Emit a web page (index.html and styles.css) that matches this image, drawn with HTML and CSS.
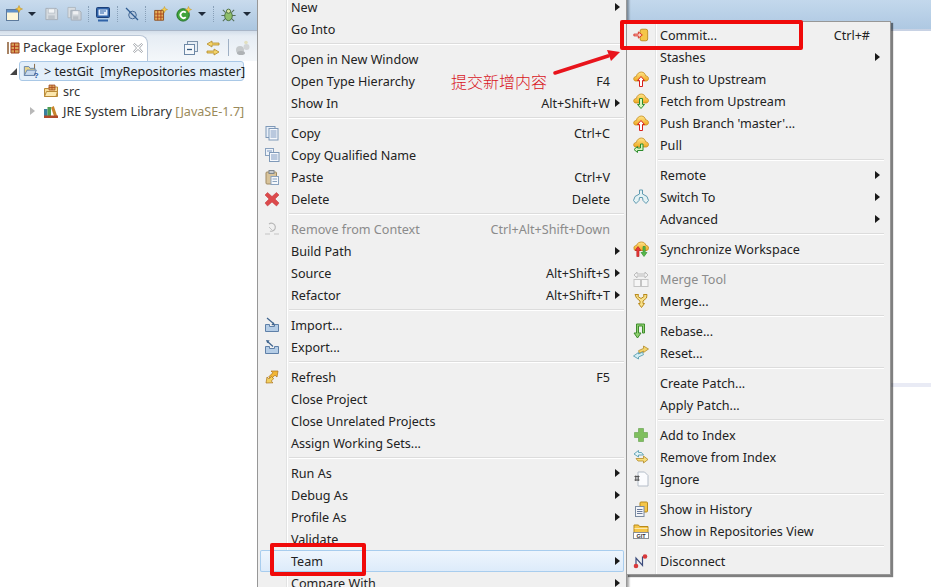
FILE: index.html
```html
<!DOCTYPE html>
<html lang="en">
<head>
<meta charset="utf-8">
<title>Eclipse Team menu</title>
<link rel="stylesheet" href="styles.css">
</head>
<body>
<svg class="sprite" xmlns="http://www.w3.org/2000/svg">
  <defs>
    <linearGradient id="gold" x1="0" y1="0" x2="0" y2="1"><stop offset="0" stop-color="#ffe68a"/><stop offset="1" stop-color="#f0a820"/></linearGradient>
    <symbol id="i-new" viewBox="0 0 18 18"><rect x="1.500" y="4.500" width="12" height="11" fill="#fdf6d8" stroke="#5d7a9c"/><rect x="2" y="5" width="11" height="2.500" fill="#5f90c8"/><path d="M14 0.500l1 2.500 2.500 1-2.500 1-1 2.500-1-2.500-2.500-1 2.500-1z" fill="#f5c33c" stroke="#b98a1c" stroke-width=".5"/></symbol>
    <symbol id="i-save" viewBox="0 0 16 16"><path d="M2 2h11l1.500 1.500v10.500h-12.500z" fill="#d6dbe0" stroke="#a4adb6"/><rect x="4.500" y="2.500" width="7" height="4.500" fill="#f2f4f6" stroke="#b0b8c0" stroke-width=".7"/><rect x="4.500" y="9.500" width="7" height="4" fill="#bcc3ca"/></symbol>
    <symbol id="i-saveall" viewBox="0 0 16 16"><path d="M1 1h8v3h-5v8h-3z" fill="#d8dde2" stroke="#a8b0b8" stroke-width=".8"/><path d="M4.500 4.500h9l1.500 1.500v8.500h-10.500z" fill="#ccd2d8" stroke="#a4adb6"/><rect x="6.500" y="5" width="5.500" height="3.500" fill="#eef0f2"/><rect x="6.500" y="10.500" width="5.500" height="3.500" fill="#b6bdc4"/></symbol>
    <symbol id="i-monitor" viewBox="0 0 16 16"><rect x="1.500" y="1.500" width="13" height="10" rx="1" fill="#2f62a8" stroke="#1d3f78"/><rect x="3.500" y="3.500" width="9" height="6" fill="#dfeafa"/><path d="M5 5h6M5 7h4" stroke="#2f62a8"/><path d="M3 14.500h10" stroke="#2f62a8" stroke-width="2"/></symbol>
    <symbol id="i-skip" viewBox="0 0 16 16"><circle cx="8.500" cy="9" r="3.800" fill="#b8cbe0" stroke="#456a96"/><path d="M2 2l12 12" stroke="#2f5c92" stroke-width="1.300"/></symbol>
    <symbol id="i-pkgadd" viewBox="0 0 18 18"><path d="M3 5h10v11h-10z" fill="#e5b15a" stroke="#8a4a1c"/><path d="M3 9h10M3 12.500h10M6.500 5v11M10 5v11" stroke="#a8401c"/><path d="M14 0.500l1 2.500 2.500 1-2.500 1-1 2.500-1-2.500-2.500-1 2.500-1z" fill="#f7cf50" stroke="#b98a1c" stroke-width=".5"/></symbol>
    <symbol id="i-run" viewBox="0 0 18 18"><circle cx="8" cy="10" r="7" fill="#3fa33a" stroke="#1e6b22"/><path d="M11 7.500a3.500 3.500 0 1 0 0 5" fill="none" stroke="#fff" stroke-width="2"/><path d="M14 0.500l1 2.500 2.500 1-2.500 1-1 2.500-1-2.500-2.500-1 2.500-1z" fill="#f7cf50" stroke="#b98a1c" stroke-width=".5"/></symbol>
    <symbol id="i-bug" viewBox="0 0 18 18"><path d="M3 4l3 3M15 4l-3 3M1.500 10h4M16.500 10h-4M3 16l3-3M15 16l-3-3" stroke="#55705a" stroke-width="1.100"/><ellipse cx="9" cy="10.500" rx="4" ry="5" fill="#8fbf6a" stroke="#4a6e42"/><circle cx="9" cy="5.500" r="2.200" fill="#d6e4a0" stroke="#4a6e42"/></symbol>
    <symbol id="i-pe" viewBox="0 0 14 14"><path d="M2 1v12" stroke="#8a5a30" stroke-width="1.500"/><path d="M5 2h8v10h-8z" fill="#d9a45a" stroke="#99401c"/><path d="M5 5.300h8M5 8.700h8M8.500 2v10" stroke="#b0381c"/></symbol>
    <symbol id="i-close" viewBox="0 0 12 12"><path d="M2.500 1.500l3.500 3 3.500-3 1 1-3 3.500 3 3.500-1 1-3.500-3-3.500 3-1-1 3-3.500-3-3.500z" fill="#fff" stroke="#8e9298" stroke-width=".8"/></symbol>
    <symbol id="i-collapse" viewBox="0 0 16 16"><rect x="4.500" y="1.500" width="10" height="10" fill="#e6edf4" stroke="#7d93aa"/><rect x="1.500" y="4.500" width="10" height="10" fill="#f5f8fb" stroke="#6d88a6"/><path d="M4 9.500h5" stroke="#34587e" stroke-width="1.300"/></symbol>
    <symbol id="i-link" viewBox="0 0 16 16"><path d="M7 1l-5 3 5 3v-2h7v-2h-7z" fill="#f3d46b" stroke="#b28a2a" stroke-width=".8"/><path d="M9 9l5 3-5 3v-2h-7v-2h7z" fill="#f3d46b" stroke="#b28a2a" stroke-width=".8"/></symbol>
    <symbol id="i-views" viewBox="0 0 16 16"><circle cx="5" cy="10" r="4" fill="#c5c9cb"/><circle cx="11.500" cy="7" r="3" fill="#d2d5d7"/><circle cx="11" cy="2.500" r="1.800" fill="#e2e0c0"/><ellipse cx="6" cy="13" rx="4" ry="2" fill="#aeb2b5"/></symbol>
    <symbol id="i-proj" viewBox="0 0 18 18"><path d="M1.500 14v-10h5l1.500 2h5.500v8z" fill="#e7d58e" stroke="#5f7ea6"/><path d="M1.500 14l3-6h10.500l-2.500 6z" fill="#c6d9ee" stroke="#5f7ea6"/><text x="12" y="17" class="qm">?</text><path d="M13 1v5" stroke="#7e5a30"/></symbol>
    <symbol id="i-src" viewBox="0 0 16 16"><path d="M1.500 13.500v-8h4l1-1.500h8v9.500z" fill="#f7dc96" stroke="#b98a38"/><path d="M1.500 13.500l2-5h11l-1.500 5z" fill="#fbe7ae" stroke="#b98a38"/><path d="M6 2h6v5h-6z" fill="#d9a45a" stroke="#99401c" stroke-width=".7"/><path d="M6 4.500h6M9 2v5" stroke="#a8401c" stroke-width=".7"/></symbol>
    <symbol id="i-jre" viewBox="0 0 16 16"><rect x="1" y="6" width="3.500" height="8" fill="#3a7f9e"/><rect x="4.500" y="4" width="3.500" height="10" fill="#4f9d52"/><path d="M8 4.500l2.800-1.500 3.500 10.500-2.800 1z" fill="#c8842c"/><rect x="1" y="12.500" width="14" height="2.500" fill="#b04a2a"/></symbol>
    <symbol id="i-copy" viewBox="0 0 16 16"><rect x="2" y="1.500" width="9" height="11" fill="#e8eff8" stroke="#7f99b8"/><rect x="5" y="3.500" width="9" height="11.500" fill="#f5f8fc" stroke="#7f99b8"/><path d="M6.500 6h6M6.500 8h6M6.500 10h6M6.500 12h6" stroke="#7f99c0"/></symbol>
    <symbol id="i-copyq" viewBox="0 0 16 16"><rect x="1.500" y="1.500" width="8" height="7" fill="#eef3f9" stroke="#8aa2bf"/><rect x="5.500" y="5.500" width="9.500" height="9" fill="#f5f8fc" stroke="#7f99b8"/><path d="M7 8h6.500M7 10h6.500M7 12h6.500M3 4h5" stroke="#7f99c0"/></symbol>
    <symbol id="i-paste" viewBox="0 0 16 16"><rect x="2" y="3" width="10.500" height="12" rx="1" fill="#d8c39a" stroke="#a08a62"/><rect x="5" y="1.500" width="5" height="3" fill="#c4c8cc" stroke="#7e858c"/><rect x="7" y="7.500" width="7.500" height="8" fill="#f6f8fb" stroke="#8aa2bf"/><path d="M8.500 10h4.500M8.500 12.500h4.500" stroke="#8aa2bf"/></symbol>
    <symbol id="i-del" viewBox="0 0 16 16"><path d="M3.500 1.500l4.500 4 4.500-4 2.500 2.500-4 4 4 4-2.500 3-4.500-4-4.500 4-2.500-3 4-4-4-4z" fill="#dc4a4c" stroke="#c03034" stroke-width=".5"/></symbol>
    <symbol id="i-rmctx" viewBox="0 0 16 16"><path d="M5 3a4 4 0 1 1 1 7" fill="none" stroke="#b8b8b8" stroke-width="1.200"/><path d="M1 13h5M10 13h5M5 6l3 3" stroke="#c4c4c4"/></symbol>
    <symbol id="i-import" viewBox="0 0 16 16"><path d="M1.500 7.500h4v2h5v-2h4v7h-13z" fill="#b5cde6" stroke="#5f80a8"/><path d="M3 1l6.500 5.500" stroke="#3f648e" stroke-width="1.200"/><path d="M11 8.500l-3.700-.6 2.500-2.700z" fill="#3f648e"/></symbol>
    <symbol id="i-export" viewBox="0 0 16 16"><path d="M1.500 7.500h4v2h5v-2h4v7h-13z" fill="#b5cde6" stroke="#5f80a8"/><path d="M9 7.500l-5.500-5" stroke="#3f648e" stroke-width="1.200"/><path d="M2 1l3.700.6-2.500 2.700z" fill="#3f648e"/></symbol>
    <symbol id="i-refresh" viewBox="0 0 16 16"><path d="M14 2l-1 6-2-1.800-4 3.800-2.200-2.200 4-4-1.800-1.800z" fill="#f2b636" stroke="#a9701a" stroke-width=".7"/><path d="M2 14l1-6 2 1.800 2.500-2.300 2.200 2.200-2.500 2.300 1.800 1.800z" fill="#f2d060" stroke="#a9701a" stroke-width=".7"/></symbol>
    <symbol id="i-commit" viewBox="0 0 18 16"><rect x="8" y="1.500" width="8.500" height="13" rx="2" fill="#f5c649" stroke="#b98a1c"/><path d="M1 7h5v-2.500l4.500 3.500-4.500 3.500v-2.500h-5z" fill="#fbd0c8" stroke="#d8281c"/></symbol>
    <symbol id="i-push" viewBox="0 0 16 16"><path d="M.8 8.500c-.5-2 1-3 2.500-3 .6-3 3-4.500 5-4.500 2.500 0 4 1.800 4.300 3.800 1.700 0 2.900 1.400 2.900 2.800 0 1.500-1.200 2.400-2.500 2.400h-10.300c-1 0-1.600-.5-1.900-1.500z" fill="url(#gold)" stroke="#c48a1c" stroke-width=".8"/><path d="M8 5.500l3.500 4h-2v6h-3v-6h-2z" fill="#fff" stroke="#d8201c"/></symbol>
    <symbol id="i-fetch" viewBox="0 0 16 16"><path d="M.8 8.500c-.5-2 1-3 2.500-3 .6-3 3-4.500 5-4.500 2.500 0 4 1.800 4.300 3.800 1.700 0 2.900 1.400 2.900 2.800 0 1.500-1.200 2.400-2.500 2.400h-10.300c-1 0-1.600-.5-1.900-1.500z" fill="url(#gold)" stroke="#c48a1c" stroke-width=".8"/><path d="M8 15.500l3.500-4h-2v-6h-3v6h-2z" fill="#d8f4c0" stroke="#2c8c2c"/></symbol>
    <symbol id="i-pull" viewBox="0 0 16 16"><path d="M.8 8.500c-.5-2 1-3 2.500-3 .6-3 3-4.500 5-4.500 2.500 0 4 1.800 4.300 3.800 1.700 0 2.900 1.400 2.900 2.800 0 1.500-1.200 2.400-2.500 2.400h-10.300c-1 0-1.600-.5-1.900-1.500z" fill="url(#gold)" stroke="#c48a1c" stroke-width=".8"/><path d="M1 12.500l3.500-3v1.500h3v-4h2.500v6.500h-5.500v2z" fill="#d8f4c0" stroke="#2c8c2c"/></symbol>
    <symbol id="i-switch" viewBox="0 0 16 16"><path d="M6.500 1v4l-4.500 2.500-1.500 4 2.500 3 3-3 .5-3h3l.5 3 3 3 2.500-3-1.500-4-4.500-2.500v-4z" fill="#e4f2f4" stroke="#5f9ab0"/></symbol>
    <symbol id="i-sync" viewBox="0 0 16 16"><path d="M1 7.500c-.5-2 1-3 2.500-3 .6-2.500 3-3.500 5-3.500 2.500 0 4 1.500 4.300 3.300 1.700 0 2.700 1.300 2.700 2.700 0 1-.5 2-1.500 2.500h-11c-1 0-1.700-.5-2-1.500z" fill="url(#gold)" stroke="#c48a1c" stroke-width=".8"/><path d="M5 5.500l3 4h-2v6h-2.200v-6h-1.800z" fill="#e8383a" stroke="#b41c1c" stroke-width=".6"/><path d="M11 15.500l3-4h-1.800v-6h-2.200v6h-2z" fill="#58b84a" stroke="#2c8c2c" stroke-width=".6"/></symbol>
    <symbol id="i-mtool" viewBox="0 0 16 16"><path d="M1 4l3-3v2h8v-2l3 3-3 3v-2h-8v2z" fill="#f0f0f0" stroke="#bdbdbd"/><rect x="1" y="8.500" width="6.500" height="7" fill="#f6f6f6" stroke="#c4c4c4"/><rect x="8.500" y="8.500" width="6.500" height="7" fill="#f6f6f6" stroke="#c4c4c4"/></symbol>
    <symbol id="i-merge" viewBox="0 0 16 16"><path d="M2 1.500h3.500l-.5 2 3 2 3-2-.5-2h3.500l-.5 3.500-3.500 3v2.500h1.500l-3 4-3-4h1.500v-2.500l-3.500-3z" fill="#f7e08a" stroke="#b98a1c"/></symbol>
    <symbol id="i-rebase" viewBox="0 0 16 16"><path d="M3.500 1v9h-2.500l3.500 5 3.500-5h-2.500v-7h4v7h2v-9h-2z" fill="#8fd070" stroke="#3f8c2c"/></symbol>
    <symbol id="i-reset" viewBox="0 0 16 16"><path d="M10.500 1l5 3-5 3.500v-1.500l-4 2.200-1-2.500 5-2.300z" fill="#f3d46b" stroke="#b28a2a" stroke-width=".8"/><path d="M.5 11l5-3.500v1.500l4-1.800 1 2.500-5 2.300v2z" fill="#d4eef4" stroke="#4a96a8" stroke-width=".8"/></symbol>
    <symbol id="i-add" viewBox="0 0 16 16"><path d="M5.500 1.500h5v4h4v5h-4v4h-5v-4h-4v-5h4z" fill="#7fbf5e" stroke="#5f9e48" stroke-width=".6"/></symbol>
    <symbol id="i-rmindex" viewBox="0 0 16 16"><path d="M1 5l4.500-3.500v2h3l2 2.500h-5v2z" fill="#e4f4f8" stroke="#4a96a8" stroke-width=".8"/><path d="M15 10.500l-4.500 3.500v-2h-5.500l-2-2.500h7.500v-2.500z" fill="#f7de7a" stroke="#b28a2a" stroke-width=".8"/></symbol>
    <symbol id="i-ignore" viewBox="0 0 16 16"><path d="M5 1h6.500l3.500 3.500v10.500h-10z" fill="#fbfcfe" stroke="#b4bdc8"/><path d="M1.500 5.500h5M1.500 9h5M2.800 4.500v5.500M5.200 4.500v5.500" stroke="#555" stroke-width="1.100"/></symbol>
    <symbol id="i-history" viewBox="0 0 16 16"><rect x="7" y="1" width="7.500" height="10" rx="1" fill="#f5c649" stroke="#b98a1c"/><rect x="2.500" y="5.500" width="8.500" height="10" fill="#f3f5f9" stroke="#7a8aa0"/><path d="M4 8.500h5.500M4 10.500h5.500M4 12.500h5.500" stroke="#6a7a98"/></symbol>
    <symbol id="i-repos" viewBox="0 0 16 16"><path d="M1 10v-8h4.500l1 1.500h8.500v6.500z" fill="#f5c649" stroke="#b98a1c"/><path d="M1.500 5.500h13" stroke="#fbe7ae"/><rect x=".5" y="9.500" width="15" height="6" fill="#fff" stroke="#8a8f96"/><text x="8" y="14.500" class="gittxt">GIT</text></symbol>
    <symbol id="i-disc" viewBox="0 0 16 16"><path d="M3 13v-8l6.500 7.500v-9" fill="none" stroke="#3c4c7c" stroke-width="1.200"/><circle cx="3" cy="13" r="2.300" fill="#d83a3c"/><circle cx="12" cy="3.500" r="2.300" fill="#d83a3c"/></symbol>
  </defs>
</svg>

<div class="screen">
  <section class="left">
    <header class="toolbar">
      <svg class="tb-icon tb-new"><use href="#i-new"/></svg><i class="caret"></i>
      <svg class="tb-icon tb-save"><use href="#i-save"/></svg>
      <svg class="tb-icon tb-saveall"><use href="#i-saveall"/></svg><i class="grip"></i>
      <svg class="tb-icon"><use href="#i-monitor"/></svg><i class="grip"></i>
      <svg class="tb-icon tb-skip"><use href="#i-skip"/></svg><i class="grip"></i>
      <svg class="tb-icon tb-pkg"><use href="#i-pkgadd"/></svg>
      <svg class="tb-icon"><use href="#i-run"/></svg><i class="caret caret-sm"></i><i class="grip"></i>
      <svg class="tb-icon tb-bug"><use href="#i-bug"/></svg><i class="caret"></i>
    </header>
    <div class="tabbar">
      <div class="tab">
        <svg class="pe-icon"><use href="#i-pe"/></svg>
        <span>Package Explorer</span>
        <svg class="close"><use href="#i-close"/></svg>
      </div>
      <div class="tab-actions">
        <svg class="act"><use href="#i-collapse"/></svg>
        <svg class="act"><use href="#i-link"/></svg>
        <i class="act-sep"></i>
        <svg class="act"><use href="#i-views"/></svg>
      </div>
    </div>
    <div class="tree">
      <div class="node node-sel">
        <i class="twist twist-open"></i>
        <div class="sel-box"><svg class="ti"><use href="#i-proj"/></svg><span>&gt; testGit&nbsp; [myRepositories master]</span></div>
      </div>
      <div class="node node-child"><svg class="ti"><use href="#i-src"/></svg><span>src</span></div>
      <div class="node node-lib"><i class="twist twist-closed"></i><svg class="ti"><use href="#i-jre"/></svg><span>JRE System Library <em>[JavaSE-1.7]</em></span></div>
    </div>
  </section>
  <section class="editor">
    <div class="editor-head"></div>
    <div class="editor-body"><div class="editor-rule"></div></div>
  </section>

  <nav class="menu menu-main">
    <div class="item"><span class="slot"></span><span class="lb">New</span><i class="ar"></i></div>
    <div class="item"><span class="slot"></span><span class="lb">Go Into</span><i class="noar"></i></div>
    <hr>
    <div class="item"><span class="slot"></span><span class="lb">Open in New Window</span><i class="noar"></i></div>
    <div class="item"><span class="slot"></span><span class="lb">Open Type Hierarchy</span><span class="sc">F4</span><i class="noar"></i></div>
    <div class="item"><span class="slot"></span><span class="lb">Show In</span><span class="sc">Alt+Shift+W</span><i class="ar"></i></div>
    <hr>
    <div class="item"><span class="slot"><svg class="mi"><use href="#i-copy"/></svg></span><span class="lb">Copy</span><span class="sc">Ctrl+C</span><i class="noar"></i></div>
    <div class="item"><span class="slot"><svg class="mi"><use href="#i-copyq"/></svg></span><span class="lb">Copy Qualified Name</span><i class="noar"></i></div>
    <div class="item"><span class="slot"><svg class="mi"><use href="#i-paste"/></svg></span><span class="lb">Paste</span><span class="sc">Ctrl+V</span><i class="noar"></i></div>
    <div class="item"><span class="slot"><svg class="mi"><use href="#i-del"/></svg></span><span class="lb">Delete</span><span class="sc">Delete</span><i class="noar"></i></div>
    <hr>
    <div class="item off"><span class="slot"><svg class="mi"><use href="#i-rmctx"/></svg></span><span class="lb">Remove from Context</span><span class="sc">Ctrl+Alt+Shift+Down</span><i class="noar"></i></div>
    <div class="item"><span class="slot"></span><span class="lb">Build Path</span><i class="ar"></i></div>
    <div class="item"><span class="slot"></span><span class="lb">Source</span><span class="sc">Alt+Shift+S</span><i class="ar"></i></div>
    <div class="item"><span class="slot"></span><span class="lb">Refactor</span><span class="sc">Alt+Shift+T</span><i class="ar"></i></div>
    <hr>
    <div class="item"><span class="slot"><svg class="mi"><use href="#i-import"/></svg></span><span class="lb">Import...</span><i class="noar"></i></div>
    <div class="item"><span class="slot"><svg class="mi"><use href="#i-export"/></svg></span><span class="lb">Export...</span><i class="noar"></i></div>
    <hr>
    <div class="item"><span class="slot"><svg class="mi"><use href="#i-refresh"/></svg></span><span class="lb">Refresh</span><span class="sc">F5</span><i class="noar"></i></div>
    <div class="item"><span class="slot"></span><span class="lb">Close Project</span><i class="noar"></i></div>
    <div class="item"><span class="slot"></span><span class="lb">Close Unrelated Projects</span><i class="noar"></i></div>
    <div class="item"><span class="slot"></span><span class="lb">Assign Working Sets...</span><i class="noar"></i></div>
    <hr>
    <div class="item"><span class="slot"></span><span class="lb">Run As</span><i class="ar"></i></div>
    <div class="item"><span class="slot"></span><span class="lb">Debug As</span><i class="ar"></i></div>
    <div class="item"><span class="slot"></span><span class="lb">Profile As</span><i class="ar"></i></div>
    <div class="item"><span class="slot"></span><span class="lb">Validate</span><i class="noar"></i></div>
    <div class="item item-hot"><span class="slot"></span><span class="lb">Team</span><i class="ar"></i></div>
    <div class="item"><span class="slot"></span><span class="lb">Compare With</span><i class="ar"></i></div>
  </nav>

  <nav class="menu menu-sub">
    <div class="item"><span class="slot"><svg class="mi"><use href="#i-commit"/></svg></span><span class="lb">Commit...</span><span class="sc">Ctrl+#</span><i class="noar"></i></div>
    <div class="item"><span class="slot"></span><span class="lb">Stashes</span><i class="ar"></i></div>
    <div class="item"><span class="slot"><svg class="mi"><use href="#i-push"/></svg></span><span class="lb">Push to Upstream</span><i class="noar"></i></div>
    <div class="item"><span class="slot"><svg class="mi"><use href="#i-fetch"/></svg></span><span class="lb">Fetch from Upstream</span><i class="noar"></i></div>
    <div class="item"><span class="slot"><svg class="mi"><use href="#i-push"/></svg></span><span class="lb">Push Branch 'master'...</span><i class="noar"></i></div>
    <div class="item"><span class="slot"><svg class="mi"><use href="#i-pull"/></svg></span><span class="lb">Pull</span><i class="noar"></i></div>
    <hr>
    <div class="item"><span class="slot"></span><span class="lb">Remote</span><i class="ar"></i></div>
    <div class="item"><span class="slot"><svg class="mi"><use href="#i-switch"/></svg></span><span class="lb">Switch To</span><i class="ar"></i></div>
    <div class="item"><span class="slot"></span><span class="lb">Advanced</span><i class="ar"></i></div>
    <hr>
    <div class="item"><span class="slot"><svg class="mi"><use href="#i-sync"/></svg></span><span class="lb">Synchronize Workspace</span><i class="noar"></i></div>
    <hr>
    <div class="item off"><span class="slot"><svg class="mi"><use href="#i-mtool"/></svg></span><span class="lb">Merge Tool</span><i class="noar"></i></div>
    <div class="item"><span class="slot"><svg class="mi"><use href="#i-merge"/></svg></span><span class="lb">Merge...</span><i class="noar"></i></div>
    <hr>
    <div class="item"><span class="slot"><svg class="mi"><use href="#i-rebase"/></svg></span><span class="lb">Rebase...</span><i class="noar"></i></div>
    <div class="item"><span class="slot"><svg class="mi"><use href="#i-reset"/></svg></span><span class="lb">Reset...</span><i class="noar"></i></div>
    <hr>
    <div class="item"><span class="slot"></span><span class="lb">Create Patch...</span><i class="noar"></i></div>
    <div class="item"><span class="slot"></span><span class="lb">Apply Patch...</span><i class="noar"></i></div>
    <hr>
    <div class="item"><span class="slot"><svg class="mi"><use href="#i-add"/></svg></span><span class="lb">Add to Index</span><i class="noar"></i></div>
    <div class="item"><span class="slot"><svg class="mi"><use href="#i-rmindex"/></svg></span><span class="lb">Remove from Index</span><i class="noar"></i></div>
    <div class="item"><span class="slot"><svg class="mi"><use href="#i-ignore"/></svg></span><span class="lb">Ignore</span><i class="noar"></i></div>
    <hr>
    <div class="item"><span class="slot"><svg class="mi"><use href="#i-history"/></svg></span><span class="lb">Show in History</span><i class="noar"></i></div>
    <div class="item"><span class="slot"><svg class="mi"><use href="#i-repos"/></svg></span><span class="lb">Show in Repositories View</span><i class="noar"></i></div>
    <hr>
    <div class="item"><span class="slot"><svg class="mi"><use href="#i-disc"/></svg></span><span class="lb">Disconnect</span><i class="noar"></i></div>
  </nav>

  <div class="mark mark-commit"></div>
  <div class="mark mark-team"></div>
  <div class="note">提交新增内容</div>
  <svg class="pointer" viewBox="0 0 80 30"><path d="M2 26L55 9" stroke="#e8141c" stroke-width="3.500" stroke-linecap="round"/><path d="M67 5L54 3l4 11z" fill="#e8141c"/></svg>
</div>
</body>
</html>
```

FILE: styles.css
```css
* { box-sizing: border-box; }
html, body { margin: 0; padding: 0; height: 100%; overflow: hidden; background: #fff; }
body { font-family: "Noto Sans", "Noto Sans CJK SC", sans-serif; font-size: 12.6px; color: #222; }
.sprite { position: absolute; width: 0; height: 0; overflow: hidden; }
.qm { font: bold 9px "Liberation Sans", sans-serif; fill: #1d4f9c; }
.gittxt { font: bold 5.5px "Liberation Sans", sans-serif; fill: #333; text-anchor: middle; }

.screen { position: relative; display: flex; width: 931px; height: 587px; overflow: hidden; }

/* left pane */
.left { width: 257px; flex: none; display: flex; flex-direction: column; background: #fff; }
.toolbar { height: 31px; flex: none; display: flex; align-items: center; padding: 0 0 2px 5px; background: linear-gradient(#c9dbed, #abc6e0); border-bottom: 1px solid #a9b6c8; }
.tb-icon { width: 16px; height: 16px; flex: none; margin-right: 6px; }
.tb-new { width: 18px; height: 18px; margin-right: 5px; }
.tb-save { width: 15px; margin-right: 8px; }
.tb-saveall { width: 15px; }
.tb-skip { margin-right: 5px; }
.tb-pkg { margin-right: 8px; }
.tb-bug { width: 17px; height: 17px; }
.caret { width: 8px; height: 4px; flex: none; border: 4px solid transparent; border-top: 4px solid #1f2b3a; border-bottom: 0; margin-right: 8px; }
.caret-sm { margin-right: 7px; }
.grip { width: 1px; height: 16px; flex: none; margin-right: 6px; border-left: 1px dotted #88a0b8; }

.tabbar { height: 30px; flex: none; display: flex; align-items: flex-end; background: linear-gradient(#d3deea 0, #e6edf4 5px, #f4f7fa 100%); }
.tab { width: 149px; height: 26px; display: flex; align-items: center; padding: 0 0 2px 6px; background: #fff; border: 1px solid #b9c6d6; border-left: 0; border-bottom: 0; border-radius: 0 8px 0 0; }
.tab span { margin-left: 3px; white-space: nowrap; color: #333; }
.pe-icon { width: 14px; height: 14px; flex: none; }
.close { width: 12px; height: 12px; flex: none; margin-left: 7px; }
.tab-actions { display: flex; align-items: center; padding: 0 0 5px 35px; }
.act { width: 16px; height: 16px; flex: none; margin-right: 6px; }
.act-sep { width: 1px; height: 17px; margin: 0 6px 0 1px; background: #9fb0c4; }

.tree { flex: 1; color: #333; }
.node { display: flex; align-items: center; height: 20px; white-space: nowrap; }
.ti { width: 16px; height: 16px; flex: none; margin-right: 4px; }
.node-sel { padding-left: 10px; }
.sel-box { display: flex; align-items: center; width: 225px; height: 20px; margin-left: 2px; padding-left: 3px; background: #e3effa; border: 1px solid #a9c8e6; border-radius: 3px; color: #222; }
.sel-box span { margin-left: 3px; }
.sel-box .ti { margin-right: 2px; }
.node-child { padding-left: 43px; }
.node-lib { padding-left: 30px; }
.node-lib .ti { margin: 0 4px 0 8px; }
.node-lib em { font-style: normal; color: #9a8a5a; }
.twist { display: block; width: 0; height: 0; flex: none; }
.twist-open { border-left: 7px solid transparent; border-bottom: 7px solid #444; }
.twist-closed { border-top: 4px solid transparent; border-bottom: 4px solid transparent; border-left: 5px solid #b8b8b8; }

/* editor */
.editor { flex: 1; display: flex; flex-direction: column; }
.editor-head { height: 31px; flex: none; background: linear-gradient(#c3d8ec, #aec8e2); border-bottom: 2px solid #c8d2e4; }
.editor-body { flex: 1; padding-top: 352px; }
.editor-rule { height: 4px; background: #e9ebf5; }

/* context menus */
.menu { position: absolute; background-color: #f0f0f0; background-image: linear-gradient(90deg, #e2e3e3, #e2e3e3 1px, #fff 1px, #fff 2px); background-repeat: no-repeat; background-size: 2px 100%; border: 1px solid #979797; padding: 2px; white-space: nowrap; }
.menu-main { left: 257px; top: -7px; width: 370px; height: 610px; background-position: 28px 0; box-shadow: 2px 2px 2px rgba(0, 0, 0, .35); }
.menu-sub { left: 626px; top: 21px; width: 265px; height: 554px; padding-right: 6px; background-position: 28px 0; box-shadow: 2px 2px 1px rgba(0, 0, 0, .5); }
.menu-sub hr { margin-right: -4px; }
.item { display: flex; align-items: center; height: 22px; position: relative; }
.slot { width: 31px; flex: none; display: flex; justify-content: center; padding-right: 7px; }
.mi { width: 16px; height: 16px; display: block; }
.lb { flex: 1; }
.ar, .noar { display: block; width: 14px; flex: none; }
.ar { height: 0; border-left: 5px solid #1a1a1a; border-top: 4px solid transparent; border-bottom: 4px solid transparent; margin-left: 5px; margin-right: 4px; width: 0; }
.off { color: #8b8b8b; }
.item-hot { background: linear-gradient(#eff6fd, #dcebfa); box-shadow: inset 0 0 0 1px #a8cdee; border-radius: 2px; }
.menu hr { height: 2px; margin: 3px 0 3px 29px; border: 0; border-top: 1px solid #dcdcdc; border-bottom: 1px solid #fff; }

/* annotations */
.mark { position: absolute; border: 4px solid #f00a0a; border-radius: 2px; }
.mark-commit { left: 620px; top: 20px; width: 183px; height: 30px; }
.mark-team { left: 270px; top: 543px; width: 96px; height: 33px; }
.note { position: absolute; left: 451px; top: 69px; font-size: 16px; line-height: 24px; color: #d8141c; font-family: "Noto Sans CJK SC", sans-serif; font-weight: 300; }
.pointer { position: absolute; left: 553px; top: 47px; width: 80px; height: 30px; }
```
